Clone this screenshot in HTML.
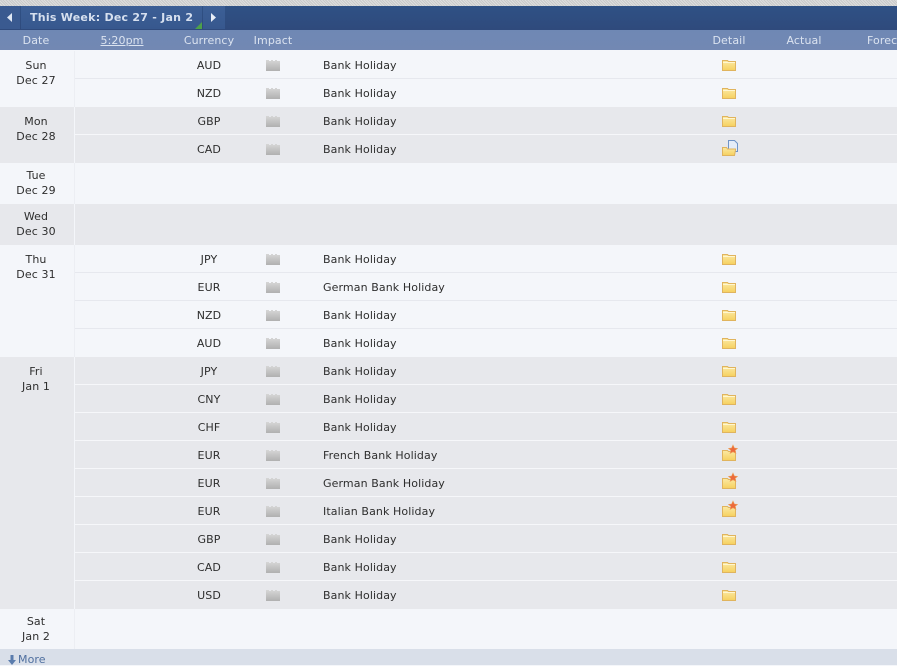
<!DOCTYPE html>
<html><head><meta charset="utf-8"><style>
html,body{margin:0;padding:0}
body{width:897px;height:665px;overflow:hidden;position:relative;background:#f4f6fa;font:11px "DejaVu Sans","Liberation Sans",sans-serif;letter-spacing:.1px;color:#2e2e2e}
div{position:absolute;box-sizing:border-box}
.top{left:0;top:0;width:897px;height:6px;background:repeating-linear-gradient(45deg,#c9caca 0 1px,#dedede 1px 2px)}
.bar{left:0;top:6px;width:897px;height:24px;background:linear-gradient(#2f5185,#2f4a7c)}
.nav{top:6px;height:23px;background:linear-gradient(#3c5f96,#37588e)}
.sub{left:0;top:30px;width:897px;height:20px;background:linear-gradient(#6f88b4,#7288b3);color:#dbe3f0;white-space:nowrap}
.sub div{top:4px;transform:translateX(-50%)}
.r{left:0;width:897px;height:28px;border-bottom:1px solid #fff}
.a{background:#f4f6fa;border-bottom-color:#e6e8ee}
.b{background:#e7e8ec;border-bottom-color:#f6f7fa}
.d{left:0;width:75px;border-right:1px solid #eceef3;padding-right:2px;text-align:center;line-height:15px;padding-top:7px}
.c{left:180px;width:58px;text-align:center;top:8px}
.t{left:323px;top:8px;white-space:nowrap}
.i{left:266px;top:8px;width:14px;height:12px}
.f{left:722px;top:9px;width:16px;height:14px}
svg,symbol{display:block;overflow:visible}
</style></head><body>
<svg width="0" height="0" style="position:absolute"><defs>
<linearGradient id="fg" x1="0" y1="0" x2="0" y2="1"><stop offset="0" stop-color="#fbe9a4"/><stop offset="1" stop-color="#f6d05e"/></linearGradient>
<linearGradient id="ig" x1="0" y1="0" x2="0" y2="1"><stop offset="0" stop-color="#d6d6d6"/><stop offset="1" stop-color="#b0b0b0"/></linearGradient>
<symbol id="imp" viewBox="0 0 14 12"><path d="M0 1h3v1h2v-1h2v1h2v-1h2v1h3v10H0z" fill="url(#ig)"/></symbol>
<symbol id="fo" viewBox="0 0 16 14"><path d="M.5 10.500V.5h5l1 1h7v9z" fill="url(#fg)" stroke="#e0b45e"/><path d="M1 2.500h12" stroke="#fff6d0"/></symbol>
<symbol id="fs" viewBox="0 0 16 14"><path d="M.5 10.500V.5h5l1 1h7v9z" fill="url(#fg)" stroke="#e0b45e"/><path d="M11 -5l1.400 3 3.100.3-2.300 2.100.7 3-2.900-1.600-2.900 1.600.7-3-2.300-2.100 3.100-.3z" fill="#ec6a3c" stroke="#eda25a" stroke-width=".6"/></symbol>
<symbol id="fd" viewBox="0 0 16 14"><path d="M6.500 -3.500h6l3 3v8h-9z" fill="#e4ecf8" stroke="#6f94c8"/><path d="M.5 11.500V3.500h4l1 1.500h8v1l-1 5.500z" fill="url(#fg)" stroke="#e0b45e"/></symbol>
</defs></svg>
<div class="top"></div><div class="bar"></div>
<div class="nav" style="left:0;width:20px;background:#3a5a90"></div>
<div class="nav" style="left:21px;width:181px"></div>
<div class="nav" style="left:203px;width:22px"></div>
<svg style="position:absolute;left:7px;top:13px" width="6" height="9"><path d="M5 0v9L0 4.500z" fill="#dfe7f3"/></svg>
<svg style="position:absolute;left:211px;top:13px" width="6" height="9"><path d="M0 0v9l5-4.500z" fill="#e8eef7"/></svg>
<svg style="position:absolute;left:195px;top:22px" width="7" height="7"><path d="M7 0v7H0z" fill="#4da04a"/></svg>
<div style="left:30px;top:11px;color:#d6e0ef;font-weight:bold;white-space:nowrap;font-size:11px;letter-spacing:.25px">This Week: Dec 27 - Jan 2</div>
<div class="sub">
<div style="left:36px">Date</div><div style="left:122px;text-decoration:underline">5:20pm</div><div style="left:209px">Currency</div><div style="left:273px">Impact</div><div style="left:729px">Detail</div><div style="left:804px">Actual</div><div style="left:867px;transform:none">Forecast</div>
</div>

<div class="r a" style="top:51px"><div class="c">AUD</div><div class="i"><svg width="14" height="12"><use href="#imp"/></svg></div><div class="t">Bank Holiday</div><div class="f"><svg width="16" height="14"><use href="#fo"/></svg></div></div>
<div class="r a" style="top:79px;border-bottom:0"><div class="c">NZD</div><div class="i"><svg width="14" height="12"><use href="#imp"/></svg></div><div class="t">Bank Holiday</div><div class="f"><svg width="16" height="14"><use href="#fo"/></svg></div></div>
<div class="r b" style="top:107px"><div class="c">GBP</div><div class="i"><svg width="14" height="12"><use href="#imp"/></svg></div><div class="t">Bank Holiday</div><div class="f"><svg width="16" height="14"><use href="#fo"/></svg></div></div>
<div class="r b" style="top:135px;border-bottom:0"><div class="c">CAD</div><div class="i"><svg width="14" height="12"><use href="#imp"/></svg></div><div class="t">Bank Holiday</div><div class="f"><svg width="16" height="14"><use href="#fd"/></svg></div></div>
<div class="r a" style="top:163px;height:41px;border-bottom:0"></div>
<div class="r b" style="top:204px;height:41px;border-bottom:0"></div>
<div class="r a" style="top:245px"><div class="c">JPY</div><div class="i"><svg width="14" height="12"><use href="#imp"/></svg></div><div class="t">Bank Holiday</div><div class="f"><svg width="16" height="14"><use href="#fo"/></svg></div></div>
<div class="r a" style="top:273px"><div class="c">EUR</div><div class="i"><svg width="14" height="12"><use href="#imp"/></svg></div><div class="t">German Bank Holiday</div><div class="f"><svg width="16" height="14"><use href="#fo"/></svg></div></div>
<div class="r a" style="top:301px"><div class="c">NZD</div><div class="i"><svg width="14" height="12"><use href="#imp"/></svg></div><div class="t">Bank Holiday</div><div class="f"><svg width="16" height="14"><use href="#fo"/></svg></div></div>
<div class="r a" style="top:329px;border-bottom:0"><div class="c">AUD</div><div class="i"><svg width="14" height="12"><use href="#imp"/></svg></div><div class="t">Bank Holiday</div><div class="f"><svg width="16" height="14"><use href="#fo"/></svg></div></div>
<div class="r b" style="top:357px"><div class="c">JPY</div><div class="i"><svg width="14" height="12"><use href="#imp"/></svg></div><div class="t">Bank Holiday</div><div class="f"><svg width="16" height="14"><use href="#fo"/></svg></div></div>
<div class="r b" style="top:385px"><div class="c">CNY</div><div class="i"><svg width="14" height="12"><use href="#imp"/></svg></div><div class="t">Bank Holiday</div><div class="f"><svg width="16" height="14"><use href="#fo"/></svg></div></div>
<div class="r b" style="top:413px"><div class="c">CHF</div><div class="i"><svg width="14" height="12"><use href="#imp"/></svg></div><div class="t">Bank Holiday</div><div class="f"><svg width="16" height="14"><use href="#fo"/></svg></div></div>
<div class="r b" style="top:441px"><div class="c">EUR</div><div class="i"><svg width="14" height="12"><use href="#imp"/></svg></div><div class="t">French Bank Holiday</div><div class="f"><svg width="16" height="14"><use href="#fs"/></svg></div></div>
<div class="r b" style="top:469px"><div class="c">EUR</div><div class="i"><svg width="14" height="12"><use href="#imp"/></svg></div><div class="t">German Bank Holiday</div><div class="f"><svg width="16" height="14"><use href="#fs"/></svg></div></div>
<div class="r b" style="top:497px"><div class="c">EUR</div><div class="i"><svg width="14" height="12"><use href="#imp"/></svg></div><div class="t">Italian Bank Holiday</div><div class="f"><svg width="16" height="14"><use href="#fs"/></svg></div></div>
<div class="r b" style="top:525px"><div class="c">GBP</div><div class="i"><svg width="14" height="12"><use href="#imp"/></svg></div><div class="t">Bank Holiday</div><div class="f"><svg width="16" height="14"><use href="#fo"/></svg></div></div>
<div class="r b" style="top:553px"><div class="c">CAD</div><div class="i"><svg width="14" height="12"><use href="#imp"/></svg></div><div class="t">Bank Holiday</div><div class="f"><svg width="16" height="14"><use href="#fo"/></svg></div></div>
<div class="r b" style="top:581px;border-bottom:0"><div class="c">USD</div><div class="i"><svg width="14" height="12"><use href="#imp"/></svg></div><div class="t">Bank Holiday</div><div class="f"><svg width="16" height="14"><use href="#fo"/></svg></div></div>
<div class="r a" style="top:609px;height:40px;border-bottom:0"></div>

<div class="d" style="top:51px;height:56px;background:#f4f6fa">Sun<br>Dec 27</div>
<div class="d" style="top:107px;height:56px;background:#e7e8ec;border-right-color:#f4f6fa">Mon<br>Dec 28</div>
<div class="d" style="top:163px;height:41px;background:#f4f6fa;padding-top:5px">Tue<br>Dec 29</div>
<div class="d" style="top:204px;height:41px;background:#e7e8ec;border-right-color:#f4f6fa;padding-top:5px">Wed<br>Dec 30</div>
<div class="d" style="top:245px;height:112px;background:#f4f6fa">Thu<br>Dec 31</div>
<div class="d" style="top:357px;height:252px;background:#e7e8ec;border-right-color:#f4f6fa">Fri<br>Jan 1</div>
<div class="d" style="top:609px;height:40px;background:#f4f6fa;padding-top:5px">Sat<br>Jan 2</div>

<div style="left:0;top:649px;width:897px;height:16px;background:#d9dfe9;color:#4f6f9f;white-space:nowrap">
<svg style="position:absolute;left:8px;top:6px" width="8" height="10"><path d="M2.500 0h3v5h2.500l-4 5-4-5h2.500z" fill="#5a7cad"/></svg>
<div style="left:18px;top:4px">More</div></div>
</body></html>
